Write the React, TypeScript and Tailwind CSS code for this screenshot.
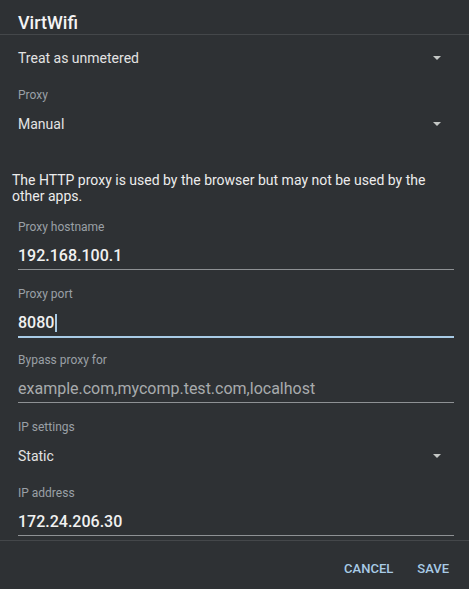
import React from 'react'

const FONT = { fontFamily: 'Roboto, "Noto Sans", Arial, sans-serif' }

function Arrow() {
  return (
    <svg width="8" height="4" viewBox="0 0 8 4" className="shrink-0">
      <path d="M0 0 L8 0 L4 4 Z" fill="#c4c7c5" />
    </svg>
  )
}

function Dropdown({ value, className = '' }: { value: string; className?: string }) {
  return (
    <div className={`flex items-center justify-between pl-[18px] pr-[28px] ${className}`}>
      <span className="text-[14px] text-[#e3e3e3]">{value}</span>
      <Arrow />
    </div>
  )
}

function Label({ text, className = '' }: { text: string; className?: string }) {
  return (
    <div className={`flex items-center pl-[18px] text-[12px] text-[#9aa0a6] ${className}`}>
      {text}
    </div>
  )
}

interface FieldProps {
  label: string
  value: string
  hint?: boolean
  focused?: boolean
  className?: string
}

function Field({ label, value, hint, focused, className = '' }: FieldProps) {
  return (
    <div className={className}>
      <Label text={label} className="h-[20px]" />
      <div className="ml-[18px] mr-[15px] mt-[6px]">
        <div className="h-[26px] flex items-center">
          <span className={`text-[16px] ${hint ? 'text-[#a8abad]' : 'text-[#f1f1f1] font-medium'}`}>{value}</span>
          {focused && <span className="ml-[1px] w-[2px] h-[18px] bg-[#a8cbe6]" />}
        </div>
        {focused ? (
          <div className="h-[2px] bg-[#a8cbe6]" />
        ) : (
          <div className="h-[2px]">
            <div className="h-[1px] bg-[#8e9194]" />
          </div>
        )}
      </div>
    </div>
  )
}

export default function App() {
  return (
    <div className="w-[469px] h-[589px] bg-[#2e3134] flex flex-col overflow-hidden" style={FONT}>
      {/* title */}
      <div className="h-[35px] border-b border-[#44474a] pl-[18px] pt-[14px]">
        <div className="text-[18px] leading-[18px] font-medium text-[#f4f4f4]">VirtWifi</div>
      </div>

      {/* scrollable body */}
      <div className="h-[505px] overflow-hidden flex flex-col">
        <Dropdown value="Treat as unmetered" className="h-[46px] shrink-0" />
        <Label text="Proxy" className="h-[28px] shrink-0" />
        <Dropdown value="Manual" className="h-[30px] shrink-0" />

        <p className="mt-[33px] pl-[12px] pr-[20px] text-[14px] leading-[16px] text-[#ececec] shrink-0">
          The HTTP proxy is used by the browser but may not be used by the other apps.
        </p>

        <Field label="Proxy hostname" value="192.168.100.1" className="mt-[13px] shrink-0" />
        <Field label="Proxy port" value="8080" focused className="mt-[13px] shrink-0" />
        <Field label="Bypass proxy for" value="example.com,mycomp.test.com,localhost" hint className="mt-[12px] shrink-0" />

        <Label text="IP settings" className="h-[28px] mt-[9px] shrink-0" />
        <Dropdown value="Static" className="h-[30px] shrink-0" />

        <Field label="IP address" value="172.24.206.30" className="mt-[12px] shrink-0" />
      </div>

      {/* actions */}
      <div className="border-t border-[#44474a] flex-1 flex justify-end items-start pt-[21px] pr-[20px] gap-[24px]">
        <button className="text-[13px] leading-[14px] font-medium text-[#a8cbe6]">CANCEL</button>
        <button className="text-[13px] leading-[14px] font-medium text-[#a8cbe6]">SAVE</button>
      </div>
    </div>
  )
}
